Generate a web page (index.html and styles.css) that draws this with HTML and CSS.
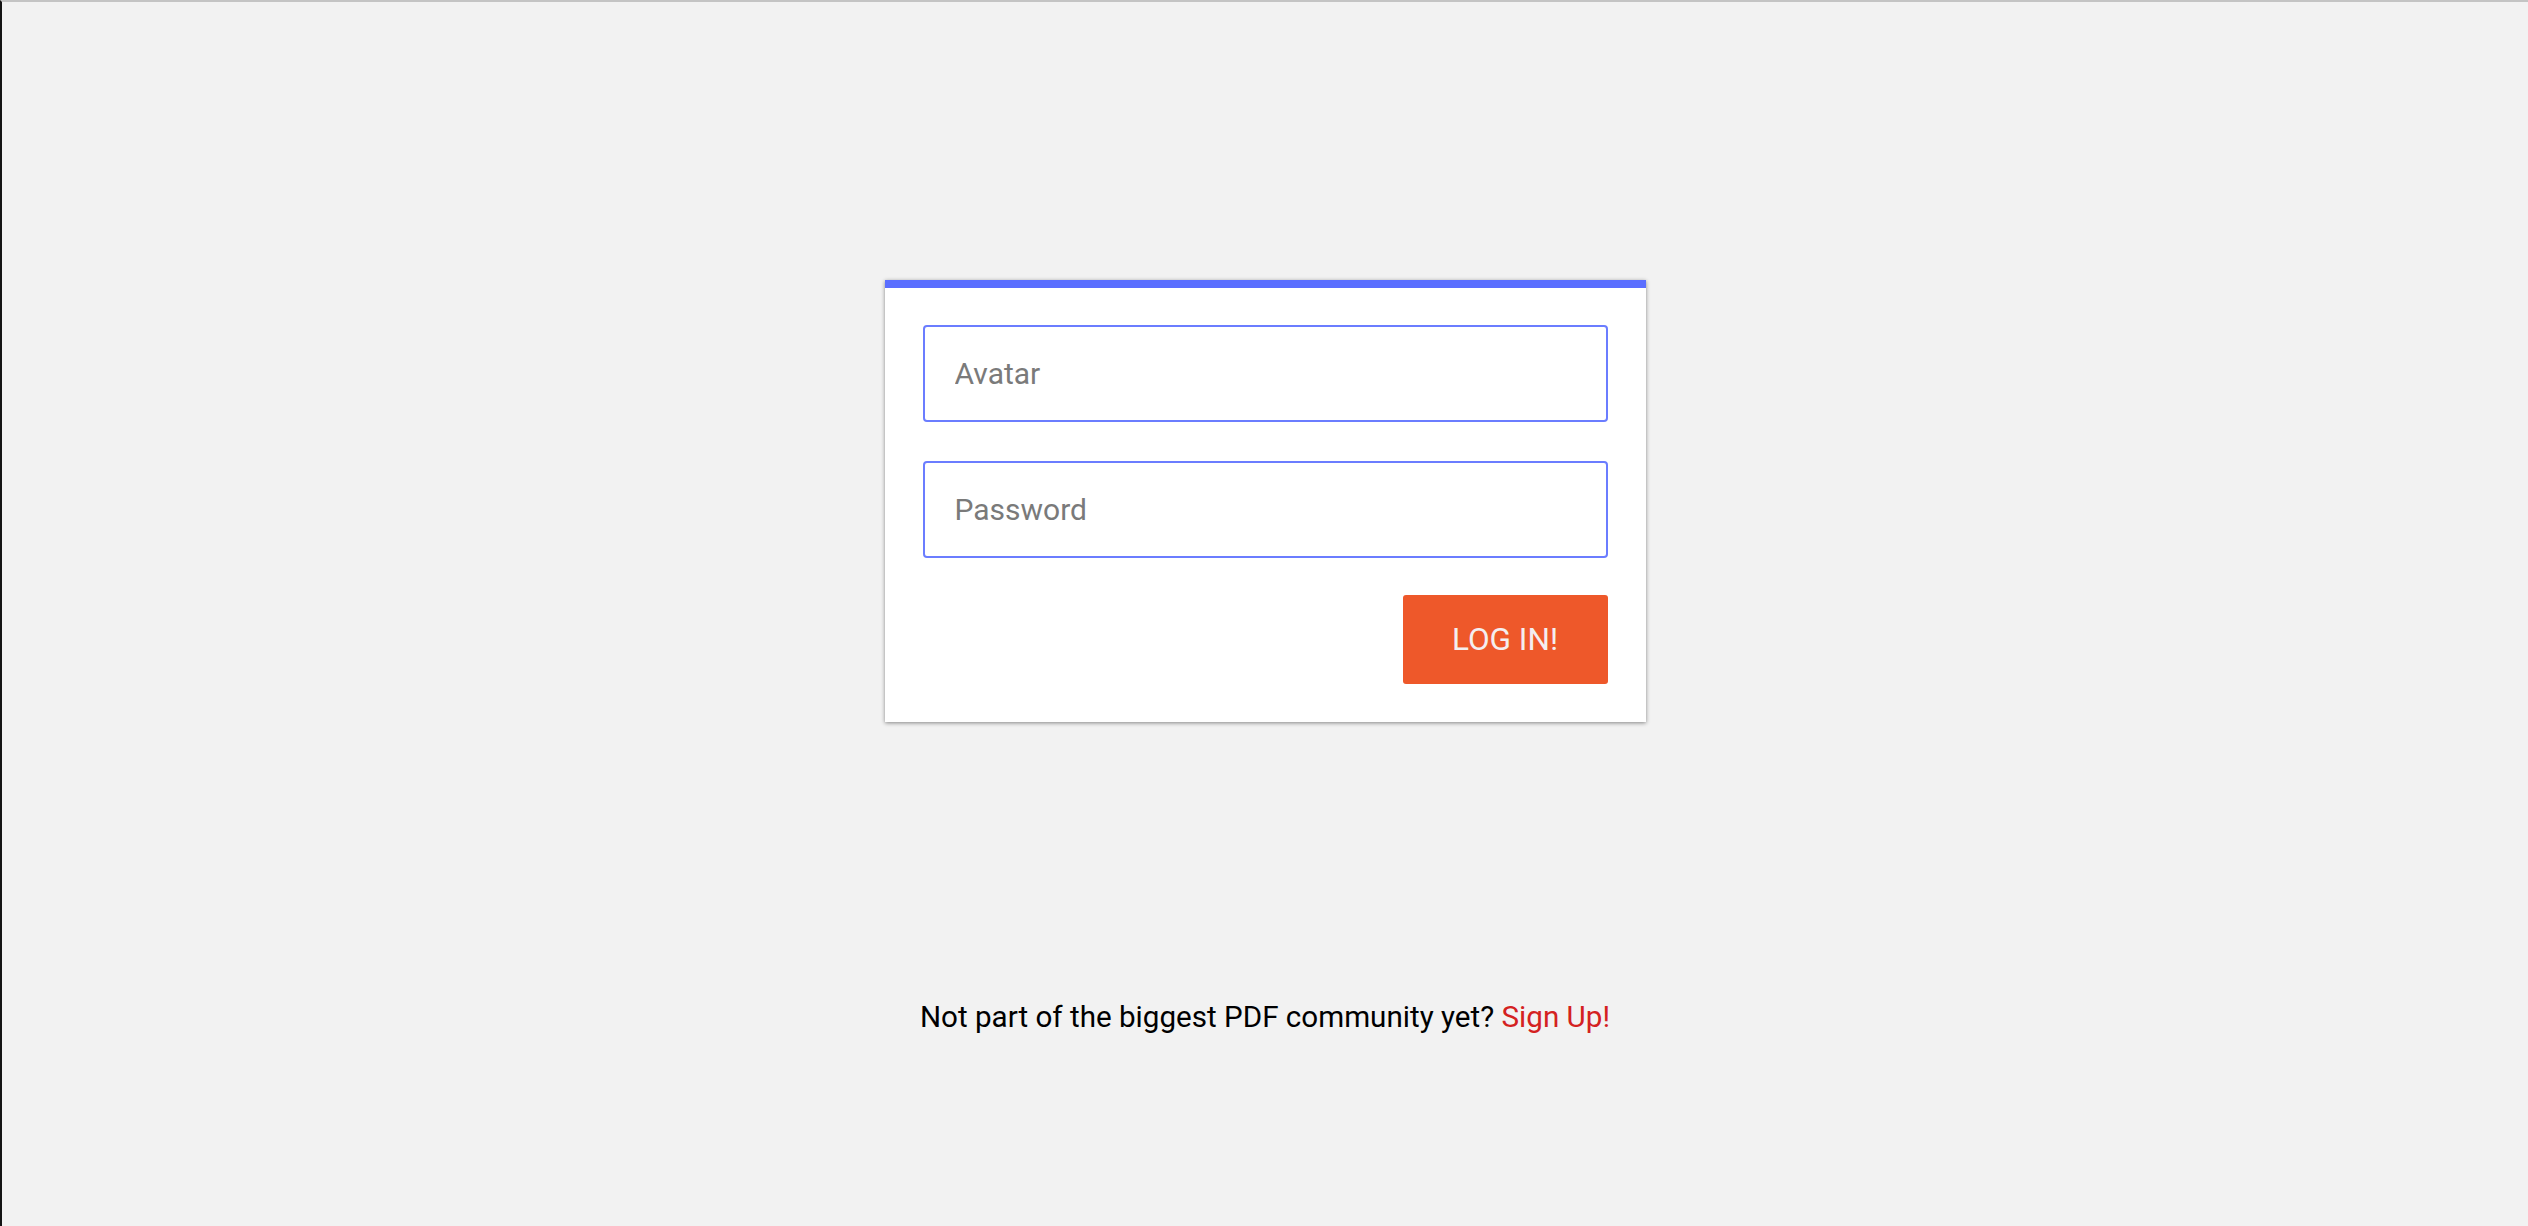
FILE: index.html
```html
<!DOCTYPE html>
<html>
<head>
<meta charset="utf-8">
<link rel="stylesheet" href="styles.css">
</head>
<body>
<div class="frame">
  <form class="card">
    <input class="field" type="text" placeholder="Avatar">
    <input class="field" type="password" placeholder="Password">
    <div class="actions">
      <button class="login" type="button">LOG IN!</button>
    </div>
  </form>
  <p class="signup">Not part of the biggest PDF community yet? <a class="signup-link" href="#">Sign Up!</a></p>
</div>
</body>
</html>
```
FILE: styles.css
```css
html, body {
  margin: 0;
  padding: 0;
  height: 100%;
}
body {
  background: #f2f2f2;
  font-family: Roboto, "Liberation Sans", sans-serif;
}
.frame {
  box-sizing: border-box;
  height: 1226px;
  border-top: 2px solid #c4c4c4;
  border-left: 2px solid #141414;
  display: flex;
  flex-direction: column;
  align-items: center;
  padding-top: 278px;
}
.card {
  box-sizing: border-box;
  width: 761px;
  background: #fff;
  border-top: 8px solid #5a6eff;
  box-shadow: 0 1px 4px rgba(0, 0, 0, 0.45);
  padding: 37px 38px 38px 38px;
  display: flex;
  flex-direction: column;
  gap: 39px;
}
.field {
  box-sizing: border-box;
  height: 97px;
  width: 100%;
  border: 2px solid #6b7dff;
  border-radius: 4px;
  padding: 0 30px;
  font-family: Roboto, "Liberation Sans", sans-serif;
  font-size: 30px;
  color: #333;
  background: #fff;
  outline: none;
}
.field::placeholder {
  color: #7a7a7a;
}
.actions {
  display: flex;
  justify-content: flex-end;
  margin-top: -2px;
}
.login {
  width: 205px;
  height: 89px;
  border: none;
  border-radius: 3px;
  background: #ee582a;
  color: #f4eef0;
  font-family: Roboto, "Liberation Sans", sans-serif;
  font-size: 31.5px;
  padding: 0;
  cursor: pointer;
}
.signup {
  margin: 278px 0 0 0;
  font-size: 29.6px;
  line-height: 35px;
  color: #000;
}
.signup-link {
  color: #d42121;
  text-decoration: none;
}
```
